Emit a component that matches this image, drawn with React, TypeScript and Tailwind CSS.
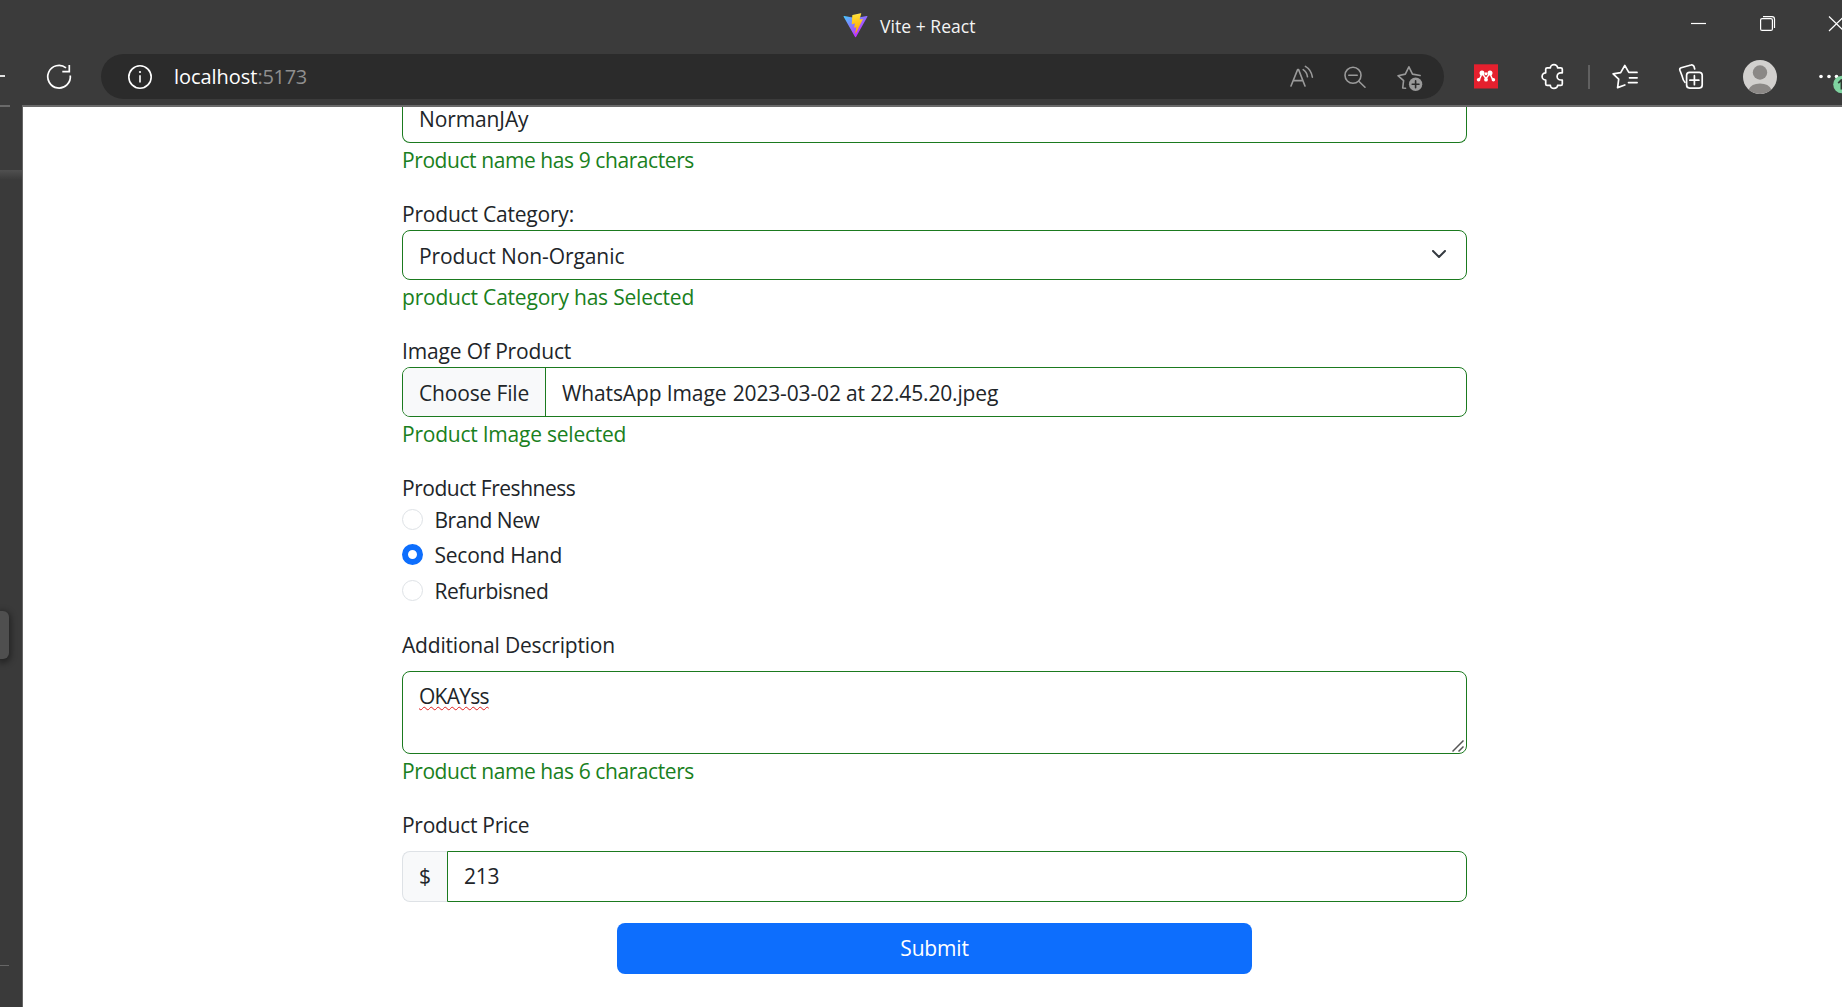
import type { ReactNode } from "react";

function Label({ className, children }: { className: string; children: ReactNode }) {
  return <div className={`h-8 leading-8 whitespace-nowrap ${className}`}>{children}</div>;
}

function Radio({ label, checked, className }: { label: string; checked?: boolean; className: string }) {
  return (
    <label className="flex h-[35.33px] items-start gap-[11.5px]">
      {checked ? (
        <span className="mt-[5px] size-[21px] shrink-0 rounded-full border-[6px] border-[#0d6efd] bg-white" />
      ) : (
        <span className="mt-[5px] size-[21px] shrink-0 rounded-full border border-[#dee2e6] bg-white" />
      )}
      <span className={`leading-8 whitespace-nowrap ${className}`}>{label}</span>
    </label>
  );
}

function ViteLogo() {
  return (
    <svg width="25" height="25" viewBox="0 0 410 404" fill="none">
      <defs>
        <linearGradient id="vite-body" x1="6" y1="33" x2="235" y2="344" gradientUnits="userSpaceOnUse">
          <stop stopColor="#41D1FF" />
          <stop offset="1" stopColor="#BD34FE" />
        </linearGradient>
        <linearGradient id="vite-bolt" x1="194.651" y1="8.818" x2="236.076" y2="292.989" gradientUnits="userSpaceOnUse">
          <stop stopColor="#FFEA83" />
          <stop offset=".083" stopColor="#FFDD35" />
          <stop offset="1" stopColor="#FFA800" />
        </linearGradient>
      </defs>
      <path
        fill="url(#vite-body)"
        d="M399.641 59.525 215.643 388.545C211.844 395.338 202.084 395.378 198.228 388.618L10.582 59.556C6.381 52.19 12.68 43.267 21.028 44.76L205.223 77.682C206.398 77.892 207.601 77.89 208.776 77.676L389.119 44.806C397.439 43.289 403.768 52.143 399.641 59.525Z"
      />
      <path
        fill="url(#vite-bolt)"
        d="M292.965 1.574 156.801 28.255C154.563 28.694 152.906 30.59 152.771 32.866L144.395 174.33C144.198 177.662 147.258 180.248 150.51 179.498L188.42 170.749C191.967 169.931 195.172 173.055 194.443 176.622L183.18 231.775C182.422 235.487 185.907 238.661 189.532 237.56L212.947 230.446C216.577 229.344 220.065 232.527 219.297 236.242L201.398 322.875C200.278 328.294 207.486 331.249 210.492 326.603L212.5 323.5 323.454 102.072C325.312 98.365 322.108 94.137 318.036 94.923L279.014 102.454C275.347 103.161 272.227 99.746 273.262 96.158L298.731 7.867C299.767 4.273 296.636.855 292.965 1.574Z"
      />
    </svg>
  );
}

function TitleBar() {
  return (
    <div className="flex h-[54px] items-start">
      <div className="flex items-center gap-3 pt-3 pl-[843px]">
        <ViteLogo />
        <span className="pt-[2px] font-['Open_Sans',sans-serif] text-[17.5px] leading-[25px] tracking-[0.04px] whitespace-nowrap text-[#f4f4f4]">
          Vite + React
        </span>
      </div>
      <svg className="ml-auto shrink-0" width="151" height="40" viewBox="1691 0 151 40" fill="none" stroke="#fff" strokeWidth="1.2">
        <path d="M1691 23.5h15" />
        <rect x="1760.6" y="18.6" width="11.8" height="11.8" rx="1.5" />
        <path d="M1763 16.6h9a2.5 2.5 0 0 1 2.5 2.5v8.9" />
        <path d="M1829 16.5l15 14.5M1829 31l15-14.5" />
      </svg>
    </div>
  );
}

function Toolbar() {
  return (
    <div className="flex h-[45px] items-center">
      <svg className="shrink-0" width="101" height="45" viewBox="0 54 101 45" fill="none" stroke="#fff" strokeWidth="1.7">
        <path d="M0 76h5" />
        <path d="M70.3 75.5A11.3 11.3 0 1 1 66 67.8" />
        <path d="M69.3 65v6.6h-7" />
      </svg>
      <div className="flex h-[45px] w-[1343px] shrink-0 items-center rounded-full bg-[#2b2b2b]">
        <svg className="ml-[26px] shrink-0" width="26" height="26" viewBox="0 0 26 26" fill="none" stroke="#fff" strokeWidth="1.6">
          <circle cx="13" cy="13" r="11.2" />
          <path d="M13 11.2v7.4" />
          <circle cx="13" cy="8" r="1.1" fill="#fff" stroke="none" />
        </svg>
        <div className="ml-[21px] flex font-['Open_Sans',sans-serif] text-[20px] leading-[28px]">
          <span className="tracking-[-0.04px] text-white">localhost</span>
          <span className="tracking-[-0.3px] text-[#8f8f8f]">:5173</span>
        </div>
        <svg className="mr-[20px] ml-auto shrink-0" width="136" height="30" viewBox="1288 61 136 30" fill="none" stroke="#9a9a9a" strokeWidth="1.6" strokeLinecap="round">
          <path d="M1291 85l6.6-16.4h1L1305 85M1293.4 79.6h9.4" strokeLinejoin="round" />
          <path d="M1303.2 68.6c2.4 1.6 3.9 4.2 4.3 7.2M1305.4 65.4c3.8 2.2 6.3 6.2 7 10.8" />
          <circle cx="1353" cy="74.3" r="8" />
          <path d="M1348.8 74.3h8.4M1358.8 80.2l6.2 6" />
          <path d="M1405.5 87.3l-2.8-.3.9-7.3-5.6-5 7.3-1.6 3.6-7.3 3.6 7.3 7.6 1.4" strokeLinejoin="round" />
          <circle cx="1415.6" cy="83.3" r="6.7" fill="#9a9a9a" stroke="none" />
          <path d="M1412.2 83.3h6.8M1415.6 79.9v6.8" stroke="#2b2b2b" />
        </svg>
      </div>
      <svg className="shrink-0" width="398" height="45" viewBox="1444 54 398 45" fill="none" stroke="#fff" strokeWidth="1.7" strokeLinecap="round" strokeLinejoin="round">
        <rect x="1474" y="64.3" width="24" height="24.2" fill="#e5202e" stroke="none" />
        <path d="M1478.9 79.3c2-1.4 1.8-3.3 2.8-5.3M1493.1 79.3c-2-1.4-1.8-3.3-2.8-5.3M1486 79v-1.5M1483 74.5l3 4.3 3-4.3" strokeWidth="1.4" />
        <g fill="#fff" stroke="none">
          <circle cx="1482" cy="73" r="2.5" />
          <circle cx="1490" cy="73" r="2.5" />
          <circle cx="1486" cy="73.8" r="1.5" />
          <circle cx="1478.6" cy="79.7" r="1.8" />
          <circle cx="1486" cy="79.7" r="1.9" />
          <circle cx="1493.4" cy="79.7" r="1.8" />
        </g>
        <path d="M1547.2 67.8h3.2a3.6 3.2 0 0 1 7.2 0h3.2a1.5 1.5 0 0 1 1.5 1.5v3.5h-1.6a3.6 3.6 0 0 0 0 7.2h1.6v3.9a1.5 1.5 0 0 1-1.5 1.5h-3.2a3.6 3 0 0 1-7.2 0h-3.2a1.5 1.5 0 0 1-1.5-1.5v-3.9a3.6 3.6 0 0 1 0-7.2v-3.5a1.5 1.5 0 0 1 1.5-1.5z" />
        <path d="M1589 65v24" stroke="#686868" strokeLinecap="butt" />
        <path d="M1624.8 85l-7.2 2.6 1.1-8.4-5.6-5.4 7.6-1.2 4.1-7.2 4 7h8.2M1629.5 77.8h7.6M1628.5 82.6h8.6" />
        <path d="M1685 82.3c-1.6-1.4-2.3-3.6-2.8-6l-2.3-6.1a2 2 0 0 1 1.3-2.5l9.8-2.7a2.4 2.4 0 0 1 3 1.6l.7 2.4" />
        <rect x="1686.6" y="72.3" width="15.6" height="15.8" rx="3" />
        <path d="M1694.4 75.7v9M1689.9 80.2h9" />
        <circle cx="1760" cy="77" r="17" fill="#d2d0ce" stroke="none" />
        <circle cx="1760" cy="72.5" r="7.2" fill="#8b8886" stroke="none" />
        <path d="M1748.6 89.6a12 9 0 0 1 22.8 0a17 17 0 0 1-22.8 0z" fill="#8b8886" stroke="none" />
        <g fill="#fff" stroke="none">
          <circle cx="1821" cy="76.5" r="1.8" />
          <circle cx="1829" cy="76.5" r="1.8" />
          <circle cx="1836.5" cy="76.5" r="1.8" />
        </g>
        <circle cx="1842" cy="84.5" r="8.8" fill="#7fd3a0" stroke="none" />
        <path d="M1838.2 83.2l3.2-3.4v9.6" stroke="#2f3a33" strokeLinecap="butt" />
      </svg>
    </div>
  );
}

function Sidebar() {
  return (
    <aside className="flex w-[23px] shrink-0 flex-col overflow-hidden border-r border-[#666] bg-[#3a3a3a]">
      <div className="h-[63px] bg-[#3b3b3b]" />
      <div className="h-[10px] bg-gradient-to-b from-[#505050] to-[#3a3a3a]" />
      <div className="mt-[431px] h-12 w-[9px] rounded-r-[6px] bg-[#4f4f4f] shadow-[0_2px_6px_2px_rgba(0,0,0,0.4)]" />
      <div className="mt-[306px] h-px w-[9px] bg-[#666]" />
    </aside>
  );
}

export default function App() {
  return (
    <div className="flex h-[1007px] w-[1842px] flex-col overflow-hidden bg-[#3b3b3b]">
      <header className="h-[105px] shrink-0">
        <TitleBar />
        <Toolbar />
      </header>
      <div className="flex h-[2px] shrink-0 bg-[#6a6a6a]">
        <div className="ml-[10px] h-full w-3 bg-[#3b3b3b]" />
      </div>
      <div className="flex min-h-0 flex-1">
        <Sidebar />
        <main className="min-w-0 flex-1 overflow-hidden bg-white pl-[379px] font-['Open_Sans',sans-serif] text-[21px] text-[#212529]">
          <form className="flex w-[1065px] flex-col">
            <div className="flex h-9 items-start rounded-b-[8px] border border-t-0 border-[#1b7a1f] px-4">
              <span className="-mt-1 leading-8 tracking-[-0.11px]">NormanJAy</span>
            </div>
            <Label className="mt-px tracking-[-0.42px] text-[#198020]">Product name has 9 characters</Label>

            <Label className="mt-[22px] tracking-[-0.2px]">Product Category:</Label>
            <div className="flex h-[50px] items-center rounded-[8px] border border-[#1b7a1f] pr-5 pl-4">
              <span className="pt-[2px] leading-8 tracking-[-0.08px]">Product Non-Organic</span>
              <svg className="mb-[2px] ml-auto" width="14" height="8" viewBox="0 0 14 8" fill="none" stroke="#343a40" strokeWidth="2" strokeLinecap="round" strokeLinejoin="round">
                <path d="M1 1l6 6 6-6" />
              </svg>
            </div>
            <Label className="mt-px tracking-[-0.21px] text-[#198020]">product Category has Selected</Label>

            <Label className="mt-[22px] tracking-[-0.15px]">Image Of Product</Label>
            <div className="flex h-[50px] overflow-hidden rounded-[8px] border border-[#1b7a1f] leading-[50px]">
              <span className="w-[143px] shrink-0 border-r border-[#1b7a1f] bg-[#f8f9fa] pl-4 tracking-[-0.16px]">Choose File</span>
              <span className="pl-4 tracking-[-0.12px]">
                WhatsApp Image <span className="ml-px tracking-[-0.15px]">2023-03-02 at 22.45.20.jpeg</span>
              </span>
            </div>
            <Label className="mt-px tracking-[-0.23px] text-[#198020]">Product Image selected</Label>

            <Label className="mt-[22px] tracking-[-0.47px]">Product Freshness</Label>
            <div className="flex h-[106px] flex-col">
              <Radio label="Brand New" className="tracking-[-0.45px]" />
              <Radio label="Second Hand" checked className="tracking-[-0.22px]" />
              <Radio label="Refurbisned" className="tracking-[-0.47px]" />
            </div>

            <Label className="mt-[19px] tracking-[-0.19px]">Additional Description</Label>
            <div className="mt-[10px] flex h-[83px] items-start justify-between rounded-[8px] border border-[#1b7a1f] pt-2 pl-4">
              <span className="leading-8 tracking-[-0.75px] underline decoration-[#e02020] decoration-wavy decoration-[1.3px] underline-offset-[2px]">OKAYss</span>
              <svg className="mr-[2px] mb-[1px] self-end" width="12" height="12" viewBox="0 0 12 12" fill="none" stroke="#555" strokeWidth="1.5">
                <path d="M.5 11.5l11-11M6.5 11.5l5-5" />
              </svg>
            </div>
            <Label className="mt-px tracking-[-0.42px] text-[#198020]">Product name has 6 characters</Label>

            <Label className="mt-[22px] tracking-[-0.28px]">Product Price</Label>
            <div className="mt-[10px] flex h-[51px] leading-[49px]">
              <span className="w-[45px] rounded-l-[8px] border border-r-0 border-[#dee2e6] bg-[#f8f9fa] pl-4">$</span>
              <span className="flex-1 rounded-r-[8px] border border-[#1b7a1f] pl-4 tracking-[-0.2px]">213</span>
            </div>
            <button type="button" className="mt-[21px] h-[51px] w-[635px] self-center rounded-[8px] bg-[#0d6efd] leading-[51px] tracking-[-0.18px] text-white">
              Submit
            </button>
          </form>
        </main>
      </div>
    </div>
  );
}
